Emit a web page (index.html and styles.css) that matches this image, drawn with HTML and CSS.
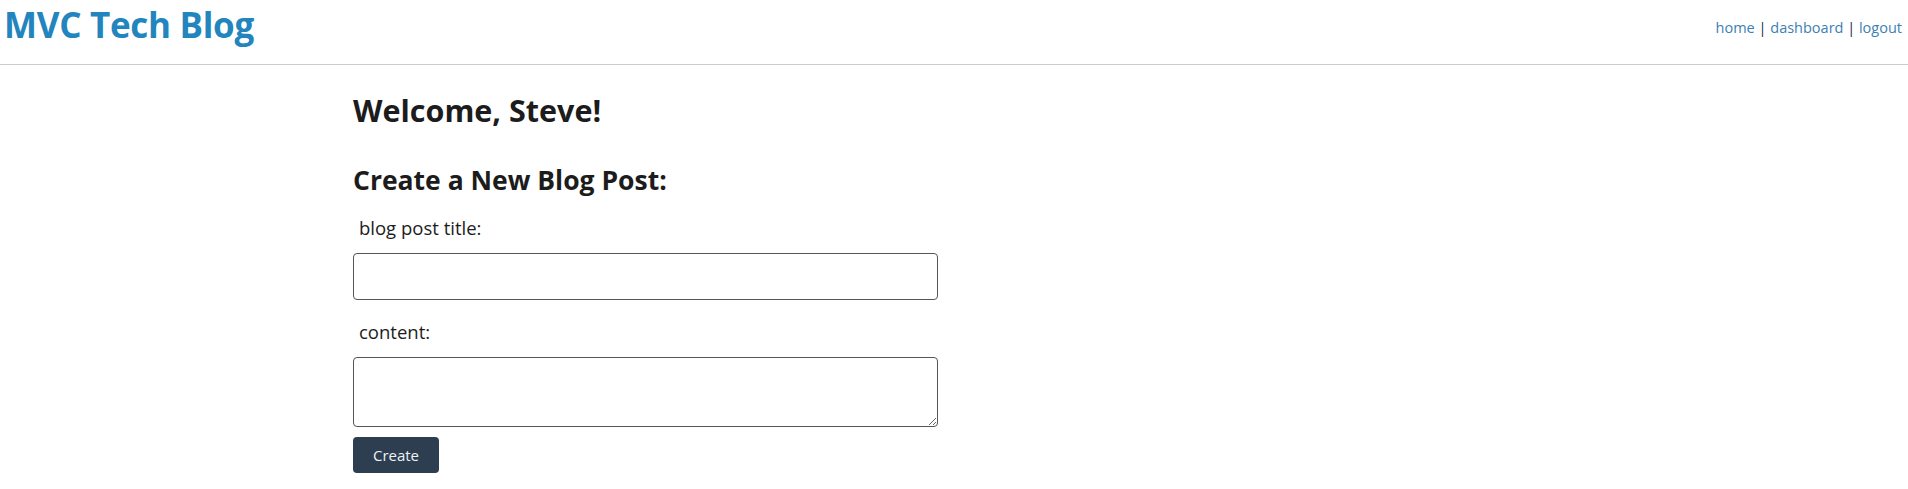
FILE: index.html
```html
<!DOCTYPE html>
<html lang="en">
<head>
<meta charset="utf-8">
<title>MVC Tech Blog</title>
<link rel="stylesheet" href="styles.css">
</head>
<body>
<header class="site-header">
  <h1 class="brand">MVC Tech Blog</h1>
  <nav class="nav">
    <a href="#" class="nav-link">home</a> | <a href="#" class="nav-link">dashboard</a> | <a href="#" class="nav-link">logout</a>
  </nav>
</header>
<main class="main">
  <h2 class="welcome">Welcome, Steve!</h2>
  <h3 class="section-title">Create a New Blog Post:</h3>
  <form class="post-form">
    <label class="field-label" for="title">blog post title:</label>
    <input class="field-input" id="title" type="text">
    <label class="field-label field-label-spaced" for="content">content:</label>
    <textarea class="field-textarea" id="content"></textarea>
    <button class="btn" type="button">Create</button>
  </form>
</main>
</body>
</html>
```
FILE: styles.css
```css
* { box-sizing: border-box; }
body {
  margin: 0;
  font-family: "Open Sans", "Noto Sans", sans-serif;
  color: #1c1c1c;
  background: #fff;
}
.site-header {
  display: flex;
  justify-content: space-between;
  align-items: flex-start;
  height: 65px;
  border-bottom: 1px solid #cccccc;
  padding: 0 6px 0 4px;
}
.brand {
  margin: 1px 0 0;
  font-size: 35px;
  font-weight: 700;
  color: #2285bd;
  letter-spacing: -0.3px;
}
.nav {
  margin-top: 18px;
  font-size: 14.5px;
  color: #1b2b4d;
}
.nav-link {
  color: #3c7fb2;
  text-decoration: none;
}
.main {
  padding: 25px 0 0 353px;
  width: 938px;
}
.welcome {
  margin: 0;
  font-size: 30.5px;
  font-weight: 700;
  line-height: 40px;
}
.section-title {
  margin: 32px 0 0;
  font-size: 26.5px;
  font-weight: 700;
  line-height: 36px;
}
.post-form {
  display: flex;
  flex-direction: column;
  align-items: flex-start;
}
.field-label {
  margin: 17px 0 0 6px;
  font-size: 18.5px;
  line-height: 26px;
}
.field-label-spaced { margin-top: 19px; }
.field-input {
  margin-top: 12px;
  width: 585px;
  height: 47px;
  border: 1px solid #555;
  border-radius: 4px;
  font-size: 16px;
}
.field-textarea {
  margin-top: 12px;
  width: 585px;
  height: 70px;
  border: 1px solid #555;
  border-radius: 4px;
  font-family: inherit;
}
.btn {
  margin-top: 10px;
  width: 86px;
  height: 36px;
  background: #2c3e50;
  color: #eef2f5;
  border: none;
  border-radius: 4px;
  font-family: inherit;
  font-size: 15px;
}
```
